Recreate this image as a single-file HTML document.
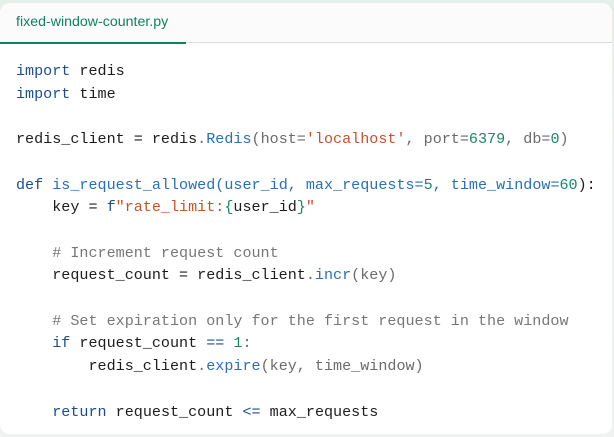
<!DOCTYPE html>
<html><head><style>
html,body{margin:0;padding:0;width:614px;height:437px;overflow:hidden;background:linear-gradient(180deg,#e4efea 0%,#eef2f0 40%,#f0f1f1 100%);}
.card{position:absolute;left:0;top:3px;width:612px;height:431px;background:#fff;border-radius:10px;overflow:hidden;}
.hdr{height:39px;background:#fbfbfb;border-bottom:1.5px solid #ddd;position:relative;}
.tab{position:absolute;left:16px;top:11px;font:14.2px "Liberation Sans",sans-serif;color:#12815f;}
.ul{position:absolute;left:0;bottom:-1.5px;width:186px;height:2px;background:#12815f;}
pre{margin:0;position:absolute;left:16px;top:57px;font:15.1px/22.7px "Liberation Mono",monospace;color:#1d1d1d;}
.k{color:#1c4f8a}.f{color:#2a6fb8}.s{color:#c4532c}.n{color:#178866}.g{color:#6b6b6b}.c{color:#777}.b{color:#2a6fb8}
</style></head><body>
<div class="card">
<div class="hdr"><span class="tab">fixed-window-counter.py</span><div class="ul"></div></div>
<pre><span class="k">import</span> redis
<span class="k">import</span> time

redis_client = redis<span class="g">.</span><span class="f">Redis</span><span class="g">(host=</span><span class="s">'localhost'</span><span class="g">, port=</span><span class="n">6379</span><span class="g">, db=</span><span class="n">0</span><span class="g">)</span>

<span class="k">def</span> <span class="f">is_request_allowed(user_id, max_requests=</span><span class="n">5</span><span class="f">, time_window=</span><span class="n">60</span>):
    key = <span class="k">f</span><span class="s">"rate_limit:</span><span class="n">{</span>user_id<span class="n">}</span><span class="s">"</span>

    <span class="c"># Increment request count</span>
    request_count = redis_client<span class="g">.</span><span class="f">incr</span><span class="g">(key)</span>

    <span class="c"># Set expiration only for the first request in the window</span>
    <span class="k">if</span> request_count <span class="k">==</span> <span class="n">1</span><span class="g">:</span>
        redis_client<span class="g">.</span><span class="f">expire</span><span class="g">(key, time_window)</span>

    <span class="k">return</span> request_count <span class="k">&lt;=</span> max_requests</pre>
</div>
</body></html>
